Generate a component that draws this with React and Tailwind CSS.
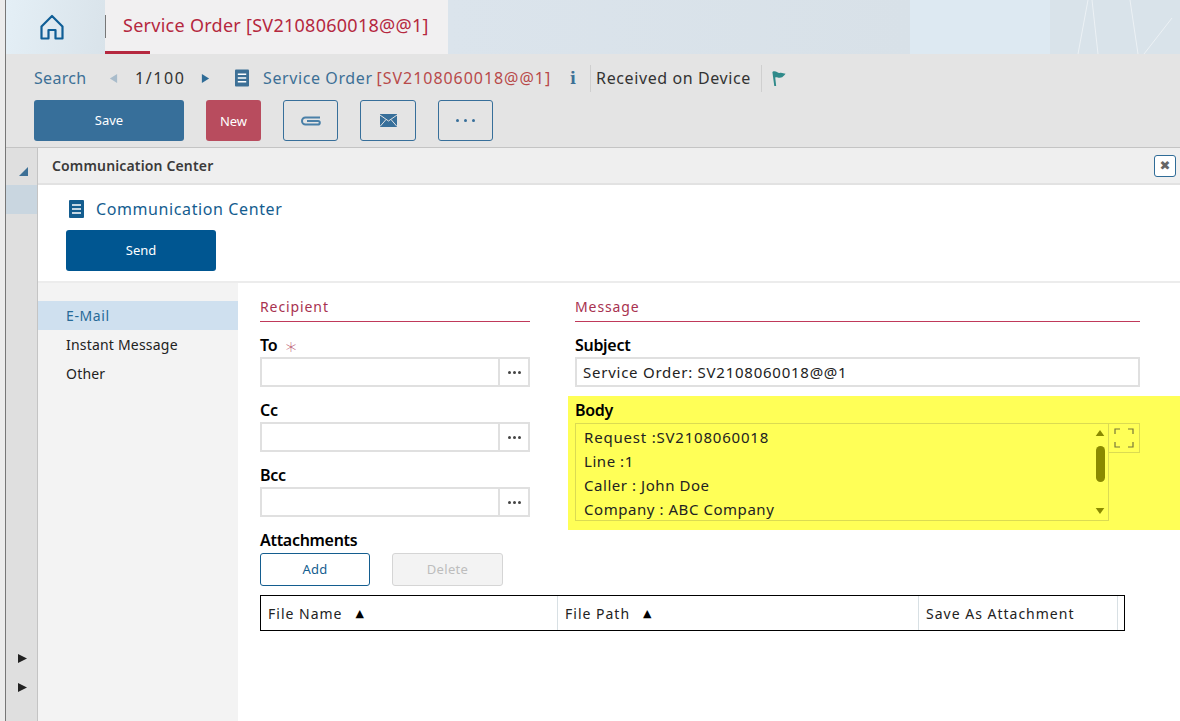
import React from "react";

const font = { fontFamily: '"Noto Sans", "DejaVu Sans", sans-serif' };

const DocIcon = ({ className }) => (
  <svg viewBox="0 0 15 18" className={className}>
    <rect width="15" height="18" rx="1" fill="currentColor" />
    <path d="M3 5h9M3 9h9M3 13h9" stroke="#fff" strokeWidth="1.6" />
  </svg>
);

const Field = ({ label, required }) => (
  <div>
    <div className="flex h-[24px] items-center gap-[7px] text-[16px] font-semibold leading-none tracking-[-0.3px] text-black">
      {label}
      {required && <span className="text-[22px] font-light leading-none text-[#b8506a]">∗</span>}
    </div>
    <div className="flex h-[30px] border-2 border-[#e0e0e0] bg-white">
      <div className="flex-1" />
      <div className="flex w-[30px] items-center justify-center gap-[2px] border-l-2 border-[#e0e0e0]">
        <i className="size-[3px] rounded-full bg-[#444]" />
        <i className="size-[3px] rounded-full bg-[#444]" />
        <i className="size-[3px] rounded-full bg-[#444]" />
      </div>
    </div>
  </div>
);

const SectionTitle = ({ children }) => (
  <div className="h-[26px] border-b border-[#c0395a] text-[14px] leading-[22px] tracking-[0.9px] text-[#a83250]">{children}</div>
);

const HeaderCell = ({ width, children }) => (
  <div className={`${width} flex items-center border-r border-[#d8e0e4] pl-[7px] text-[14px] tracking-[1px] text-[#222]`}>{children}</div>
);

export default function App() {
  return (
    <div style={font} className="flex h-[721px] w-[1180px] overflow-hidden bg-white">
      <div className="w-[5px] shrink-0 bg-[#ececec]" />
      <div className="w-px shrink-0 bg-[#777]" />
      <div className="flex min-w-0 flex-1 flex-col">
        {/* top banner */}
        <header className="flex h-[54px] shrink-0">
          <div className="flex w-[99px] items-center bg-[linear-gradient(100deg,#e4eff6_0%,#d9e3ea_100%)] pl-[34px]">
            <svg viewBox="0 0 24 26" className="h-[26px] w-[24px] text-[#0f5e96]">
              <path d="M1.500 12.500L12 2l10.500 10.500V24.500H15.500V16h-7v8.500H1.500z" fill="none" stroke="currentColor" strokeWidth="2.2" strokeLinejoin="round" />
            </svg>
          </div>
          <div className="relative flex w-[343px] items-center bg-[#f1f0f1] pb-[4px] pl-[18px]">
            <div className="absolute left-0 top-[15px] h-[23px] w-px bg-[#777]" />
            <span className="whitespace-nowrap text-[18px] tracking-[0.27px] text-[#b5283f]">Service Order [SV2108060018@@1]</span>
            <div className="absolute bottom-0 left-0 h-[3px] w-[45px] bg-[#b5283f]" />
          </div>
          <div className="h-full w-[462px] bg-[linear-gradient(90deg,#dbe4ec_0%,#d8e1e8_100%)]" />
          <div className="h-full w-[140px] bg-[#dde9f2]" />
          <div className="h-full flex-1 overflow-hidden bg-[#d9e3ea]">
            <svg viewBox="0 0 130 54" className="h-full w-full text-white/50">
              <path d="M28 54L38 0M48 54L42 0M88 54L80 0M94 54L122 18" fill="none" stroke="currentColor" strokeWidth="1" />
            </svg>
          </div>
        </header>

        {/* toolbar */}
        <section className="h-[94px] shrink-0 border-b border-[#c4c4c4] bg-[#e4e4e4] pl-[28px]">
          <div className="flex h-[46px] items-center pt-[2px] text-[16px] tracking-[0.3px]">
            <span className="w-[75px] text-[#3d7096]">Search</span>
            <svg viewBox="0 0 10 12" className="h-[11px] w-[9px] text-[#a9bccb]"><path d="M9 1v10L1 6z" fill="currentColor" /></svg>
            <span className="ml-[17px] w-[63px] tracking-[1.6px] text-[#333]">1/100</span>
            <svg viewBox="0 0 10 12" className="ml-[3px] h-[11px] w-[9px] text-[#2f6c97]"><path d="M1 1v10l8-5z" fill="currentColor" /></svg>
            <DocIcon className="ml-[25px] h-[18px] w-[14px] text-[#3d7096]" />
            <span className="ml-[14px] tracking-[0.6px] text-[#3d7096]">Service Order</span>
            <span className="ml-[4px] tracking-[0.95px] text-[#b84a4a]">[SV2108060018@@1]</span>
            <span className="ml-[19px] w-[20px] font-serif text-[19px] font-bold text-[#3d7096]">i</span>
            <div className="flex h-[27px] items-center border-l border-[#cfcfcf] pl-[5px] tracking-[0.6px] text-[#333]">Received on Device</div>
            <div className="ml-[10px] flex h-[27px] items-center border-l border-[#cfcfcf] pl-[9px]">
              <svg viewBox="0 0 16 18" className="h-[17px] w-[16px] text-[#2f8a8a]">
                <path d="M1 2c4-2 5 2 9 1l5 1c-2 2-3 4-5 4-3 1-4-1-6 0l1 9H3z" fill="currentColor" />
              </svg>
            </div>
          </div>
          <div className="flex items-start">
            <button className="h-[41px] w-[150px] rounded-[3px] bg-[#376f9a] text-[13px] text-white">Save</button>
            <button className="ml-[22px] h-[41px] w-[55px] rounded-[3px] bg-[#b84c5e] pt-[2px] text-[13px] text-white">New</button>
            <button className="ml-[22px] flex h-[41px] w-[55px] items-center justify-center rounded-[3px] border border-[#376f9a]">
              <svg viewBox="0 0 22 12" className="h-[12px] w-[22px] text-[#4a80a8]">
                <path d="M20 2.500H5.500a3.500 3.500 0 000 7H18a1.800 1.800 0 000-3.600H7" fill="none" stroke="currentColor" strokeWidth="2" />
              </svg>
            </button>
            <button className="ml-[22px] flex h-[41px] w-[56px] items-center justify-center rounded-[3px] border border-[#376f9a]">
              <svg viewBox="0 0 17 13" className="h-[13px] w-[17px]">
                <rect width="17" height="13" fill="#376f9a" />
                <path d="M0 1l8.500 6L17 1M0 12.500l6-7M17 12.500l-6-7" fill="none" stroke="#e4e4e4" strokeWidth="1" />
              </svg>
            </button>
            <button className="ml-[22px] flex h-[41px] w-[55px] items-center justify-center gap-[5px] rounded-[3px] border border-[#376f9a]">
              <i className="size-[3px] rounded-full bg-[#376f9a]" />
              <i className="size-[3px] rounded-full bg-[#376f9a]" />
              <i className="size-[3px] rounded-full bg-[#376f9a]" />
            </button>
          </div>
        </section>

        <div className="flex min-h-0 flex-1">
          {/* collapsed side rail */}
          <aside className="flex w-[32px] shrink-0 flex-col border-r border-[#c4c4c4] bg-[#dfdfdf]">
            <div className="flex h-[37px] items-center pl-[13px] pt-[9px]">
              <svg viewBox="0 0 9 9" className="size-[9px] text-[#3d7096]"><path d="M9 0v9H0z" fill="currentColor" /></svg>
            </div>
            <div className="h-[29px] bg-[#c9d6e0]" />
            <div className="mt-auto flex flex-col gap-[20px] pb-[29px] pl-[12px]">
              <svg viewBox="0 0 9 9" className="size-[9px] text-[#222]"><path d="M0 0l9 4.500L0 9z" fill="currentColor" /></svg>
              <svg viewBox="0 0 9 9" className="size-[9px] text-[#222]"><path d="M0 0l9 4.500L0 9z" fill="currentColor" /></svg>
            </div>
          </aside>

          {/* dialog */}
          <main className="flex min-w-0 flex-1 flex-col">
            <div className="flex h-[37px] shrink-0 items-center justify-between border-b-2 border-[#e2e2e2] bg-[#efefef] pl-[14px] pr-[4px]">
              <span className="text-[14px] font-semibold tracking-[0.15px] text-[#3a3a3a]">Communication Center</span>
              <button className="flex h-[22px] w-[22px] items-center justify-center rounded-[3px] border border-[#2f6c97] bg-white text-[13px] font-bold leading-none text-[#666]">✖</button>
            </div>
            <div className="h-[98px] shrink-0 border-b-2 border-[#ececec] pl-[28px] pt-[15px]">
              <div className="flex h-[18px] items-center">
                <DocIcon className="ml-[3px] h-[18px] w-[15px] text-[#145d8f]" />
                <span className="ml-[12px] text-[16px] tracking-[0.6px] text-[#145d8f]">Communication Center</span>
              </div>
              <button className="mt-[12px] h-[41px] w-[150px] rounded-[3px] bg-[#005691] text-[13px] text-white">Send</button>
            </div>

            <div className="flex min-h-0 flex-1">
              <nav className="w-[200px] shrink-0 bg-[#f3f3f3] pt-[18px] text-[14px] tracking-[0.2px]">
                <div className="flex h-[29px] items-center bg-[#cfe0ef] pl-[28px] tracking-[0.6px] text-[#276a98]">E-Mail</div>
                <div className="flex h-[29px] items-center pl-[28px] text-[#222]">Instant Message</div>
                <div className="flex h-[29px] items-center pl-[28px] text-[#222]">Other</div>
              </nav>

              <div className="min-w-0 flex-1 pl-[22px] pt-[13px]">
                <div className="flex items-start">
                  <div className="w-[270px]">
                    <SectionTitle>Recipient</SectionTitle>
                    <div className="mt-[11px] flex flex-col gap-[11px]">
                      <Field label="To" required />
                      <Field label="Cc" />
                      <Field label="Bcc" />
                    </div>
                  </div>

                  <div className="ml-[45px] w-[565px]">
                    <SectionTitle>Message</SectionTitle>
                    <div className="mt-[11px] flex h-[24px] items-center text-[16px] font-semibold tracking-[-0.3px] text-black">Subject</div>
                    <div className="flex h-[30px] items-center border-2 border-[#e0e0e0] pl-[6px] text-[15px] tracking-[0.75px] text-[#222]">Service Order: SV2108060018@@1</div>
                    <div className="-ml-[7px] -mr-[40px] mt-[9px] h-[134px] bg-[#ffff57] pl-[7px] pt-[2px]">
                      <div className="flex h-[25px] items-center pb-[1px] text-[16px] font-semibold tracking-[-0.3px] text-black">Body</div>
                      <div className="flex items-start">
                        <div className="relative h-[98px] w-[534px] border border-[#dbdb52] pl-[8px] pt-[1px] text-[15px] leading-[24px] tracking-[0.55px] text-[#222]">
                          <div className="tracking-[0.8px]">Request :SV2108060018</div>
                          <div>Line :1</div>
                          <div>Caller : John Doe</div>
                          <div>Company : ABC Company</div>
                          <div className="absolute bottom-[1px] right-[2px] top-[1px] flex w-[12px] flex-col items-center justify-between py-[5px]">
                            <svg viewBox="0 0 10 7" className="h-[6px] w-[10px] text-[#8a8a00]"><path d="M5 0l5 7H0z" fill="currentColor" /></svg>
                            <div className="-mt-[5px] mb-[12px] h-[36px] w-[9px] rounded-full bg-[#8a8a00]" />
                            <svg viewBox="0 0 10 7" className="h-[6px] w-[10px] text-[#8a8a00]"><path d="M5 7l5-7H0z" fill="currentColor" /></svg>
                          </div>
                        </div>
                        <div className="flex h-[30px] w-[31px] items-center justify-center border border-l-0 border-[#dbdb52]">
                          <svg viewBox="0 0 20 20" className="size-[20px] text-[#77773a]">
                            <path d="M1 6V1h5M14 1h5v5M1 14v5h5M14 19h5v-5" fill="none" stroke="currentColor" strokeWidth="1.200" />
                          </svg>
                        </div>
                      </div>
                    </div>
                  </div>
                </div>

                <div>
                  <div className="flex h-[23px] items-center pb-[3px] text-[16px] font-semibold tracking-[-0.3px] text-black">Attachments</div>
                  <div className="flex">
                    <button className="h-[33px] w-[110px] rounded-[3px] border border-[#145d8f] text-[13px] tracking-[0.3px] text-[#145d8f]">Add</button>
                    <button className="ml-[22px] h-[33px] w-[111px] rounded-[3px] border border-[#d5d5d5] bg-[#f3f3f3] text-[13px] tracking-[0.3px] text-[#bdbdbd]">Delete</button>
                  </div>
                  <div className="mt-[9px] flex h-[36px] w-[865px] border border-black">
                    <HeaderCell width="w-[297px]">File Name<span className="ml-[13px] text-[11px] text-black">▲</span></HeaderCell>
                    <HeaderCell width="w-[361px]">File Path<span className="ml-[13px] text-[11px] text-black">▲</span></HeaderCell>
                    <HeaderCell width="w-[199px]">Save As Attachment</HeaderCell>
                  </div>
                </div>
              </div>
            </div>
          </main>
        </div>
      </div>
    </div>
  );
}
